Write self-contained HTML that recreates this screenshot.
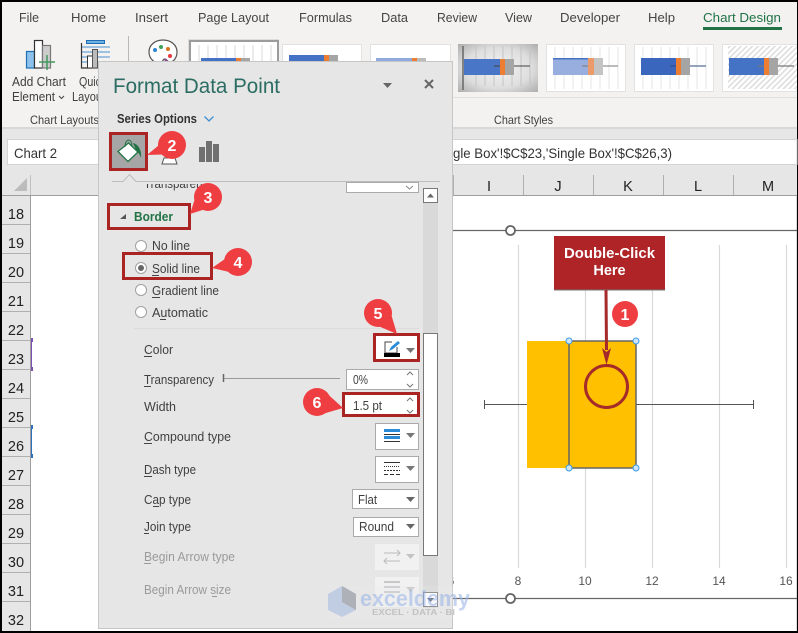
<!DOCTYPE html>
<html><head><meta charset="utf-8"><style>
html,body{margin:0;padding:0;background:#000;width:798px;height:633px;overflow:hidden}
svg{display:block}
text{font-family:"Liberation Sans",sans-serif;font-size:12px;fill:#444}
.t{font-size:13px;fill:#444}
.p{font-size:12.5px;fill:#3f3f3f}
.g{font-size:12.5px;fill:#9a9a9a}
.r{font-size:14.5px;fill:#222;text-anchor:middle}
.c{font-size:14.5px;fill:#222;text-anchor:middle}
.n{font-size:16px;fill:#fff;font-weight:bold;text-anchor:middle}
.tick{font-size:12px;fill:#555;text-anchor:middle}
</style></head><body>
<svg width="798" height="633" viewBox="0 0 798 633" xmlns="http://www.w3.org/2000/svg">
<defs>
<radialGradient id="dg" r="0.7"><stop offset="0" stop-color="#f4f4f4"/><stop offset=".6" stop-color="#dedede"/><stop offset="1" stop-color="#aeaeae"/></radialGradient>
<pattern id="hatch" width="4" height="4" patternUnits="userSpaceOnUse" patternTransform="rotate(45)"><rect width="4" height="4" fill="#fff"/><rect width="1.500" height="4" fill="#dcdcdc"/></pattern>
<clipPath id="cl"><rect x="140" y="184" width="100" height="8"/></clipPath>
</defs>
<rect width="798" height="633" fill="#000"/>
<!-- ribbon -->
<rect x="2" y="2" width="795" height="126" fill="#f3f2f1"/>
<rect x="2" y="128" width="795" height="11" fill="#e6e6e6"/>
<rect x="2" y="127" width="795" height="2" fill="#d8d8d8"/>
<text class="t" x="19" y="22" textLength="20" lengthAdjust="spacingAndGlyphs">File</text>
<text class="t" x="71" y="22" textLength="35" lengthAdjust="spacingAndGlyphs">Home</text>
<text class="t" x="135" y="22" textLength="33" lengthAdjust="spacingAndGlyphs">Insert</text>
<text class="t" x="198" y="22" textLength="71" lengthAdjust="spacingAndGlyphs">Page Layout</text>
<text class="t" x="299" y="22" textLength="53" lengthAdjust="spacingAndGlyphs">Formulas</text>
<text class="t" x="381" y="22" textLength="27" lengthAdjust="spacingAndGlyphs">Data</text>
<text class="t" x="437" y="22" textLength="40" lengthAdjust="spacingAndGlyphs">Review</text>
<text class="t" x="505" y="22" textLength="27" lengthAdjust="spacingAndGlyphs">View</text>
<text class="t" x="560" y="22" textLength="60" lengthAdjust="spacingAndGlyphs">Developer</text>
<text class="t" x="648" y="22" textLength="27" lengthAdjust="spacingAndGlyphs">Help</text>
<text class="t" x="703" y="22" textLength="78" lengthAdjust="spacingAndGlyphs" style="fill:#217346">Chart Design</text>
<rect x="703" y="27" width="79" height="3" fill="#217346"/>
<!-- Add chart element icon -->
<rect x="26.500" y="51.500" width="8" height="16.500" fill="#8cc2ec" stroke="#1f6fb2" stroke-width="1.200"/>
<rect x="34.500" y="40.500" width="8" height="27.500" fill="#fff" stroke="#333" stroke-width="1.200"/>
<rect x="42.500" y="45.500" width="8" height="22.500" fill="#ccc" stroke="#777" stroke-width="1.200"/>
<path d="M39 62h16M47 55v15" stroke="#3f9a5e" stroke-width="1.500"/>
<text class="p" x="12" y="86" textLength="54" lengthAdjust="spacingAndGlyphs">Add Chart</text>
<text class="p" x="12" y="101" textLength="43" lengthAdjust="spacingAndGlyphs">Element</text>
<path d="M59 96l2.500 2.500 2.500-2.500" fill="none" stroke="#444"/>
<!-- quick layout icon -->
<rect x="86.500" y="40.500" width="18" height="3" fill="#6fb3e6" stroke="#1f6fb2"/>
<path d="M81 47h29M81 52h29M81 57h29M81 62h29" stroke="#4a90d0"/>
<path d="M81.500 43v25h29" fill="none" stroke="#333" stroke-width="1.200"/>
<rect x="87.500" y="56" width="5" height="12" fill="#fff" stroke="#333"/>
<rect x="92.500" y="49.500" width="5" height="18.500" fill="#bbb" stroke="#555"/>
<text class="p" x="79" y="86" textLength="22" lengthAdjust="spacingAndGlyphs">Quic</text>
<text class="p" x="72" y="101" textLength="30" lengthAdjust="spacingAndGlyphs">Layou</text>
<text class="p" x="30" y="124" textLength="69" lengthAdjust="spacingAndGlyphs" style="font-size:12px">Chart Layouts</text>
<rect x="128" y="36" width="1" height="42" fill="#b8b8b8"/>
<!-- palette -->
<path d="M149 52c0-7 6-12 14-12s14 5 14 12c0 5-3 10-7 10-3 0-3-3-5-3s-3 3-3 5c-7 0-13-5-13-12z" fill="#fff" stroke="#555" stroke-width="1.200"/>
<circle cx="155" cy="50" r="2" fill="#2e86d0"/><circle cx="161" cy="47" r="2" fill="#3fa35a"/><circle cx="168" cy="49" r="2" fill="#d9731a"/><circle cx="170" cy="56" r="2" fill="#e8383d"/><circle cx="166" cy="61" r="1.500" fill="#a03aa0"/>
<!-- style thumbs -->
<rect x="180" y="97" width="617" height="1" fill="#e2e0de"/>
<rect x="188.500" y="39.500" width="90" height="54" fill="#fff" stroke="#ddd"/>
<rect x="190" y="41" width="88" height="30" fill="#fff" stroke="#9c9c9c" stroke-width="2"/>
<path d="M199 45v20M208 45v20M217 45v20M226 45v20M235 45v20M244 45v20M253 45v20M262 45v20M271 45v20" stroke="#e6e6e6" stroke-width="1.500"/>
<rect x="201" y="58" width="35" height="5" fill="#4472c4"/><rect x="236" y="58" width="5" height="5" fill="#ed7d31"/><rect x="241" y="58" width="9" height="5" fill="#a5a5a5"/>
<rect x="282.500" y="44.500" width="79" height="30" fill="#fff" stroke="#e2e2e2"/>
<rect x="289" y="55" width="35" height="8" fill="#4472c4"/><rect x="324" y="55" width="5" height="8" fill="#ed7d31"/><rect x="329" y="55" width="9" height="8" fill="#a5a5a5"/>
<rect x="370.500" y="44.500" width="80" height="30" fill="#fff" stroke="#e2e2e2"/>
<rect x="376" y="58" width="36" height="6" fill="#8faadc"/><rect x="412" y="58" width="5" height="6" fill="#ed7d31"/><rect x="417" y="58" width="9" height="6" fill="#bbb"/>
<rect x="458" y="44" width="80" height="48" fill="url(#dg)"/>
<path d="M463 46v44" stroke="#666" stroke-width="1.500"/>
<path d="M476 46v40M485 46v40M494 46v40M503 46v40M512 46v40M521 46v40M530 46v40" stroke="#c4c4c4"/>
<rect x="464" y="59" width="36" height="16" fill="#4a76c8"/><rect x="500" y="59" width="5" height="16" fill="#ed7d31"/><rect x="505" y="59" width="9" height="16" fill="#a5a5a5"/><path d="M494 66h6M514 66h16" stroke="#444"/>
<rect x="546.500" y="44.500" width="79" height="47" fill="#fff" stroke="#e2e2e2"/>
<path d="M555 47v42M564 47v42M573 47v42M582 47v42M591 47v42M600 47v42M609 47v42M618 47v42" stroke="#eee" stroke-width="1.500"/>
<rect x="553" y="58" width="35" height="17" fill="#98aede"/><rect x="553" y="58" width="35" height="1.500" fill="#4472c4"/><rect x="588" y="58" width="6" height="17" fill="#ed9a6a"/><rect x="594" y="58" width="9" height="17" fill="#c4c4c4"/><path d="M582 66h6M603 66h15" stroke="#777"/>
<rect x="634.500" y="44.500" width="79" height="47" fill="#fff" stroke="#e2e2e2"/>
<path d="M643 47v42M652 47v42M661 47v42M670 47v42M679 47v42M688 47v42M697 47v42M706 47v42" stroke="#eee" stroke-width="1.500"/>
<rect x="641" y="58" width="35" height="17" fill="#3a66bd"/><rect x="676" y="58" width="5" height="17" fill="#ed7d31"/><rect x="681" y="58" width="9" height="17" fill="#a5a5a5"/><path d="M670 66h6M690 66h16" stroke="#2f4a80"/>
<rect x="722.500" y="44.500" width="74" height="47" fill="#fff" stroke="#e2e2e2"/>
<rect x="728" y="46" width="69" height="43" fill="url(#hatch)"/>
<rect x="729" y="58" width="35" height="17" fill="#4472c4"/><rect x="764" y="58" width="5" height="17" fill="#ed7d31"/><rect x="769" y="58" width="9" height="17" fill="#a5a5a5"/><path d="M758 66h6M778 66h16" stroke="#777" stroke-width="1.200"/>
<text class="p" x="494" y="124" textLength="59" lengthAdjust="spacingAndGlyphs" style="font-size:12px">Chart Styles</text>
<!-- formula bar -->
<rect x="2" y="129" width="795" height="36" fill="#e6e6e6"/>
<rect x="7.500" y="139.500" width="95" height="25" fill="#fff" stroke="#d4d4d4"/>
<text x="14" y="158" textLength="43" lengthAdjust="spacingAndGlyphs" style="font-size:14px;fill:#333">Chart 2</text>
<rect x="440" y="139.500" width="357" height="25" fill="#fff" stroke="#d4d4d4"/>
<text x="453" y="158" textLength="219" lengthAdjust="spacingAndGlyphs" style="font-size:14px;fill:#333">gle Box'!$C$23,'Single Box'!$C$26,3)</text>
<!-- headers -->
<rect x="2" y="165" width="795" height="31" fill="#e6e6e6"/>
<rect x="2" y="195" width="795" height="1" fill="#9e9e9e"/>
<path d="M14 191h13v-13z" fill="#bcbcbc"/>
<rect x="30" y="175" width="1" height="20" fill="#c0c0c0"/>
<path d="M453.500 175v20M523.500 175v20M593.500 175v20M663.500 175v20M733.500 175v20" stroke="#b0b0b0"/>
<text class="c" x="489" y="191">I</text><text class="c" x="558" y="191">J</text><text class="c" x="628" y="191">K</text><text class="c" x="698" y="191">L</text><text class="c" x="768" y="191">M</text>
<rect x="2" y="196" width="28.500" height="435" fill="#e6e6e6"/>
<rect x="30" y="196" width="1" height="435" fill="#9e9e9e"/>
<rect x="31" y="196" width="766" height="435" fill="#fff"/>
<path d="M2 224.500h28M2 253.500h28M2 282.500h28M2 311.500h28M2 340.500h28M2 369.500h28M2 398.500h28M2 427.500h28M2 456.500h28M2 485.500h28M2 514.500h28M2 543.500h28M2 572.500h28M2 601.500h28" stroke="#b0b0b0"/>
<text class="r" x="16" y="219">18</text><text class="r" x="16" y="248">19</text><text class="r" x="16" y="277">20</text><text class="r" x="16" y="306">21</text><text class="r" x="16" y="335">22</text><text class="r" x="16" y="364">23</text><text class="r" x="16" y="393">24</text><text class="r" x="16" y="422">25</text><text class="r" x="16" y="451">26</text><text class="r" x="16" y="480">27</text><text class="r" x="16" y="509">28</text><text class="r" x="16" y="538">29</text><text class="r" x="16" y="567">30</text><text class="r" x="16" y="596">31</text><text class="r" x="16" y="625">32</text>
<path d="M31.500 340v29" stroke="#7a50b0"/><rect x="31" y="338" width="2" height="4" fill="#7a50b0"/><rect x="31" y="367" width="2" height="4" fill="#7a50b0"/>
<path d="M31.500 427v29" stroke="#2f6fc0"/><rect x="31" y="425" width="2" height="4" fill="#2f6fc0"/><rect x="31" y="454" width="2" height="4" fill="#2f6fc0"/>
<!-- chart -->
<rect x="796" y="196" width="1" height="435" fill="#ddd"/>
<path d="M453 230.500h344M453 598.500h344" stroke="#666" stroke-width="1.200"/>
<circle cx="510.500" cy="230.500" r="4.500" fill="#fff" stroke="#666" stroke-width="1.800"/>
<circle cx="510.500" cy="598.500" r="4.500" fill="#fff" stroke="#666" stroke-width="1.800"/>
<path d="M518.500 245v323M585.500 245v323M652.500 245v323M719.500 245v323M786.500 245v323" stroke="#d9d9d9" stroke-width="1.200"/>
<text class="tick" x="451" y="585">6</text>
<text class="tick" x="518" y="585">8</text><text class="tick" x="585" y="585">10</text><text class="tick" x="652" y="585">12</text><text class="tick" x="719" y="585">14</text><text class="tick" x="786" y="585">16</text>
<path d="M484.500 404.500h43M636 404.500h117M484.500 400v9M753.500 400v9" stroke="#555" stroke-width="1"/>
<rect x="527" y="341" width="42" height="127" fill="#ffc000"/>
<rect x="569" y="341" width="67" height="127" fill="#ffc000" stroke="#666" stroke-width="1.500"/>
<g fill="#cfe6fa" stroke="#3b9ae1"><circle cx="569" cy="341" r="3"/><circle cx="636" cy="341" r="3"/><circle cx="569" cy="468" r="3"/><circle cx="636" cy="468" r="3"/></g>
<!-- double click callout -->
<rect x="554" y="236" width="111" height="54" fill="#ae2427"/>
<rect x="554" y="289.500" width="111" height="1" fill="#777"/>
<text x="564" y="258" textLength="91" lengthAdjust="spacingAndGlyphs" style="font-size:14.500px;font-weight:bold;fill:#fff">Double-Click</text>
<text x="609.500" y="275" text-anchor="middle" style="font-size:14.500px;font-weight:bold;fill:#fff">Here</text>
<path d="M606 290l.5 60" stroke="#a52a2a" stroke-width="3"/>
<path d="M602 348l4.500 4 4.500-4-4.500 17z" fill="#a52a2a"/>
<circle cx="606.500" cy="386.500" r="21" fill="none" stroke="#a52a2a" stroke-width="3"/>
<circle cx="625" cy="314" r="13" fill="#ef3e42"/>
<text class="n" x="625" y="320">1</text>
<!-- panel -->
<rect x="98.500" y="61.500" width="354" height="567" fill="#e6e6e6" stroke="#c6c6c6" stroke-width="1"/>
<text x="113" y="93" textLength="167" lengthAdjust="spacingAndGlyphs" style="font-size:21px;fill:#2b6d62">Format Data Point</text>
<path d="M383 83h9l-4.500 5z" fill="#666"/>
<path d="M425 80l8 8M433 80l-8 8" stroke="#666" stroke-width="2"/>
<text x="117" y="123" textLength="80" lengthAdjust="spacingAndGlyphs" style="font-size:12.500px;font-weight:bold;fill:#333">Series Options</text>
<path d="M204.500 116.500l4.500 4.500 4.500-4.500" fill="none" stroke="#3e8ed0" stroke-width="1.300"/>
<!-- tab icons -->
<rect x="110.500" y="133.500" width="36" height="36" fill="#a6a6a6" stroke="#aa2424" stroke-width="3"/>
<path d="M128.500 143l9.500 9-10 9.500-10-10z" fill="#fff" stroke="#217346" stroke-width="1.300"/>
<path d="M125 147c0-9 7-9 7-1" fill="none" stroke="#217346" stroke-width="1"/>
<path d="M133 143c5 1 9 7 8 15-1-3-2-5-4-6z" fill="#217346"/>
<path d="M162 164l2-6h11l2 6z" fill="#fff" stroke="#555"/>
<rect x="199" y="147" width="6" height="15" fill="#707070"/><rect x="206" y="141" width="6" height="21" fill="#707070"/><rect x="213" y="144" width="6" height="18" fill="#707070"/>
<path d="M112 181.500h11l6.500-7 6.500 7h304" fill="none" stroke="#bdbdbd" stroke-width="1"/>
<!-- clipped row -->
<rect x="346.500" y="182.500" width="72" height="10" fill="#fff" stroke="#aaa"/>
<path d="M406 186l3.500 3 3.500-3" fill="none" stroke="#888"/>
<text class="p" x="144" y="188" textLength="70" lengthAdjust="spacingAndGlyphs" clip-path="url(#cl)">Transparency</text>
<!-- scrollbar -->
<rect x="423" y="188" width="15" height="420" fill="#d9d9d9"/>
<rect x="423.500" y="188.500" width="14" height="14" fill="#fff" stroke="#777"/>
<path d="M427 197.500h7l-3.500-4z" fill="#666"/>
<rect x="423.500" y="333.500" width="14" height="222" fill="#fff" stroke="#777"/>
<rect x="423.500" y="592.500" width="14" height="14" fill="#fff" stroke="#777"/>
<path d="M427 598h7l-3.500 4z" fill="#444"/>
<!-- border section -->
<path d="M120 219h6v-5z" fill="#555"/>
<text x="134" y="221" textLength="39" lengthAdjust="spacingAndGlyphs" style="font-size:12.500px;font-weight:bold;fill:#217346">Border</text>
<rect x="108.500" y="204.500" width="81" height="24" fill="none" stroke="#aa2424" stroke-width="3"/>
<g fill="#fff" stroke="#a0a0a0"><circle cx="141" cy="246" r="5.500"/><circle cx="141" cy="268" r="5.500"/><circle cx="141" cy="290" r="5.500"/><circle cx="141" cy="312" r="5.500"/></g>
<circle cx="141" cy="268" r="3" fill="#666"/>
<text class="p" x="152" y="250" textLength="38" lengthAdjust="spacingAndGlyphs">No line</text>
<text class="p" x="152" y="273" textLength="48" lengthAdjust="spacingAndGlyphs">Solid line</text>
<text class="p" x="152" y="295" textLength="67" lengthAdjust="spacingAndGlyphs">Gradient line</text>
<text class="p" x="152" y="317" textLength="56" lengthAdjust="spacingAndGlyphs">Automatic</text>
<rect x="123.500" y="253.500" width="88" height="25" fill="none" stroke="#aa2424" stroke-width="3"/>
<rect x="134" y="328" width="285" height="1" fill="#dcdcdc"/>
<text class="p" x="144" y="354" textLength="29" lengthAdjust="spacingAndGlyphs">Color</text>
<text class="p" x="144" y="384" textLength="70" lengthAdjust="spacingAndGlyphs">Transparency</text>
<text class="p" x="144" y="411" textLength="32" lengthAdjust="spacingAndGlyphs">Width</text>
<text class="p" x="144" y="441" textLength="87" lengthAdjust="spacingAndGlyphs">Compound type</text>
<text class="p" x="144" y="474" textLength="52" lengthAdjust="spacingAndGlyphs">Dash type</text>
<text class="p" x="144" y="504" textLength="47" lengthAdjust="spacingAndGlyphs">Cap type</text>
<text class="p" x="144" y="531" textLength="47" lengthAdjust="spacingAndGlyphs">Join type</text>
<text class="g" x="144" y="561" textLength="91" lengthAdjust="spacingAndGlyphs">Begin Arrow type</text>
<text class="g" x="144" y="594" textLength="87" lengthAdjust="spacingAndGlyphs">Begin Arrow size</text>
<!-- accelerator underlines -->
<path d="M152 275.500h7M152 297.500h8M160 319.500h6M144 356.500h8M144 386.500h7M144 443.500h8M144 476.500h8M153 506.500h6M144 533.500h5" stroke="#444" stroke-width="1"/>
<path d="M144 563.500h7M212 596.500h5" stroke="#9a9a9a" stroke-width="1"/>
<!-- color btn -->
<rect x="374.500" y="334.500" width="44" height="26" fill="#fff" stroke="#aa2424" stroke-width="3"/>
<path d="M392 342h-7v11h12v-6" fill="none" stroke="#444"/>
<path d="M389 351l2-4 7-6 2 2-7 6z" fill="#2a8bd8"/>
<rect x="384" y="353" width="16" height="4" fill="#000"/>
<path d="M406 348h9l-4.500 5z" fill="#777"/>
<!-- transparency -->
<path d="M223.500 374v8" stroke="#666" stroke-width="1.500"/><path d="M224 378.500h116" stroke="#999"/>
<rect x="346.500" y="369.500" width="72" height="20" fill="#fff" stroke="#aaa"/>
<text class="p" x="353" y="384" textLength="15" lengthAdjust="spacingAndGlyphs">0%</text>
<path d="M407 375l3-3 3 3M407 384l3 3 3-3" fill="none" stroke="#777"/>
<!-- width -->
<rect x="343.500" y="393.500" width="75" height="22" fill="#fff" stroke="#aa2424" stroke-width="3"/>
<text class="p" x="353" y="410" textLength="29" lengthAdjust="spacingAndGlyphs">1.5 pt</text>
<path d="M407 401l3-3 3 3M407 410l3 3 3-3" fill="none" stroke="#777"/>
<!-- compound -->
<rect x="375.500" y="423.500" width="43" height="26" fill="#fff" stroke="#aaa"/>
<rect x="384" y="429" width="16" height="3" fill="#2a8bd8"/><rect x="384" y="434" width="16" height="1" fill="#333"/><rect x="384" y="436" width="16" height="3" fill="#2a8bd8"/><rect x="384" y="441" width="16" height="1" fill="#333"/>
<path d="M406 433h9l-4.500 5z" fill="#777"/>
<!-- dash -->
<rect x="375.500" y="456.500" width="43" height="26" fill="#fff" stroke="#aaa"/>
<path d="M384 462.500h16" stroke="#333"/><path d="M384 466.500h16" stroke="#333" stroke-dasharray="1 1"/><path d="M384 470.500h16" stroke="#333" stroke-dasharray="2 1"/><path d="M384 474.500h16" stroke="#333" stroke-dasharray="4 2"/>
<path d="M406 466h9l-4.500 5z" fill="#777"/>
<!-- cap -->
<rect x="352.500" y="489.500" width="66" height="19" fill="#fff" stroke="#aaa"/>
<text class="p" x="358" y="504" textLength="19" lengthAdjust="spacingAndGlyphs">Flat</text>
<path d="M406 497h9l-4.500 5z" fill="#666"/>
<rect x="353.500" y="517.500" width="65" height="19" fill="#fff" stroke="#aaa"/>
<text class="p" x="359" y="531" textLength="35" lengthAdjust="spacingAndGlyphs">Round</text>
<path d="M406 524h9l-4.500 5z" fill="#666"/>
<!-- disabled -->
<rect x="375" y="544" width="44" height="26" fill="#f1f1f1"/>
<path d="M384 553h16M384 561h16M397 550l3 3-3 3M387 558l-3 3 3 3" fill="none" stroke="#bbb"/>
<path d="M406 554h9l-4.500 5z" fill="#c4c4c4"/>
<rect x="375" y="577" width="44" height="30" fill="#f1f1f1"/>
<path d="M384 582h16M384 587h16M384 592h16" stroke="#bbb" stroke-width="1.500"/>
<path d="M406 587h9l-4.500 5z" fill="#c4c4c4"/>
<!-- callouts -->
<g fill="#ef3e42">
<circle cx="172" cy="145" r="14"/><path d="M147 155l17-14 14 13z"/>
<circle cx="208" cy="197" r="14"/><path d="M190 214l8-25 20 16z"/>
<circle cx="238" cy="262" r="14"/><path d="M212 268l20-14 6 20z"/>
<circle cx="378" cy="313" r="14"/><path d="M397 334l-26-11 18-16z"/>
<circle cx="317" cy="402" r="14"/><path d="M343 408l-24 7 3-26z"/>
</g>
<text class="n" x="172" y="151">2</text>
<text class="n" x="208" y="203">3</text>
<text class="n" x="238" y="268">4</text>
<text class="n" x="378" y="319">5</text>
<text class="n" x="317" y="408">6</text>
<!-- watermark -->
<g opacity=".6">
<rect x="328" y="586" width="125" height="32" fill="#e8e8ee" opacity=".4"/>
<path d="M342 586l14 8v16l-14 7-14-7v-16z" fill="#a9bde0"/>
<path d="M342 586l14 8v16l-14-8z" fill="#8a8f98"/>
<text x="360" y="606" textLength="110" lengthAdjust="spacingAndGlyphs" style="font-size:22px;font-weight:bold;fill:#9db6e6">exceldemy</text>
<text x="372" y="615" textLength="83" lengthAdjust="spacingAndGlyphs" style="font-size:8px;font-weight:bold;fill:#aaa">EXCEL · DATA · BI</text>
</g>
</svg>
</body></html>
